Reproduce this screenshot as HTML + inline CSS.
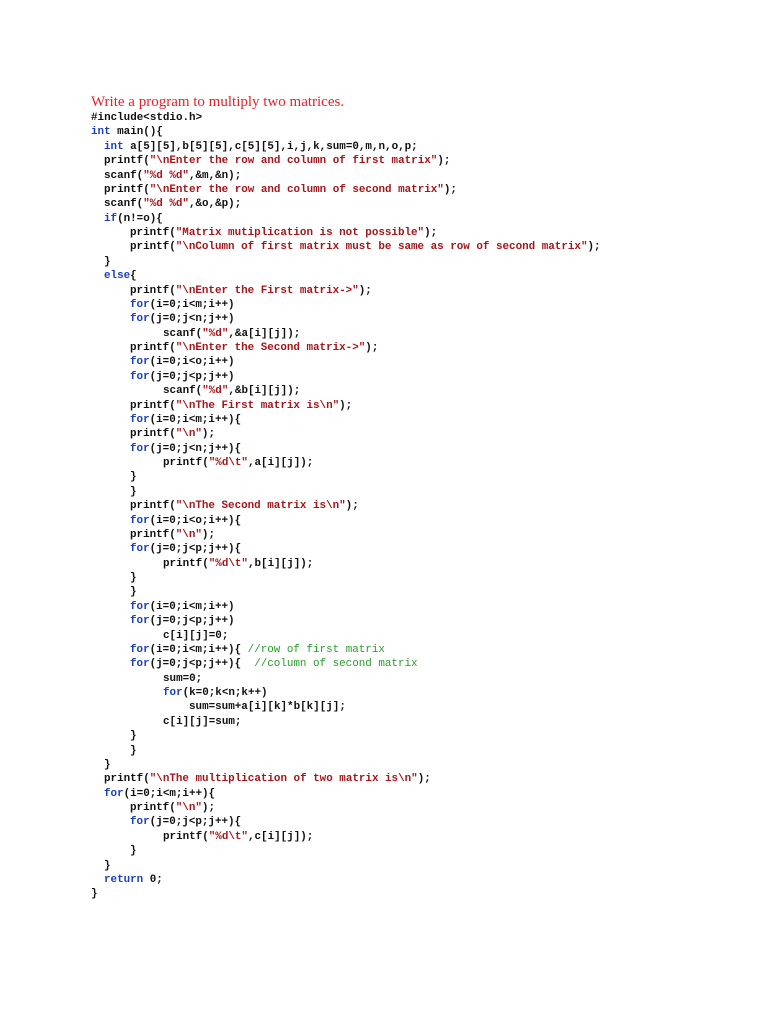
<!DOCTYPE html>
<html><head><meta charset="utf-8"><style>
body{margin:0;background:#fff;width:768px;height:1024px;position:relative;overflow:hidden}
.t{position:absolute;left:91px;top:94px;font:15px "Liberation Serif",serif;color:#e8202a}
.c{position:absolute;left:0;top:111px;font:bold 10.9px/14.39px "Liberation Mono",monospace;color:#111}
.c div{height:14.39px;white-space:pre}
.a{padding-left:91px}.b{padding-left:104px}.d{padding-left:130px}.e{padding-left:163px}.f{padding-left:189px}
k{color:#1a3fc0}s{color:#a3161a;text-decoration:none}g{color:#2a9a2a;font-weight:normal}
</style></head><body>
<div class="t">Write a program to multiply two matrices.</div>
<div class="c"><div class="a">#include&lt;stdio.h&gt;</div><div class="a"><k>int</k> main(){</div><div class="b"><k>int</k> a[5][5],b[5][5],c[5][5],i,j,k,sum=0,m,n,o,p;</div><div class="b">printf(<s>"\nEnter the row and column of first matrix"</s>);</div><div class="b">scanf(<s>"%d %d"</s>,&amp;m,&amp;n);</div><div class="b">printf(<s>"\nEnter the row and column of second matrix"</s>);</div><div class="b">scanf(<s>"%d %d"</s>,&amp;o,&amp;p);</div><div class="b"><k>if</k>(n!=o){</div><div class="d">printf(<s>"Matrix mutiplication is not possible"</s>);</div><div class="d">printf(<s>"\nColumn of first matrix must be same as row of second matrix"</s>);</div><div class="b">}</div><div class="b"><k>else</k>{</div><div class="d">printf(<s>"\nEnter the First matrix-&gt;"</s>);</div><div class="d"><k>for</k>(i=0;i&lt;m;i++)</div><div class="d"><k>for</k>(j=0;j&lt;n;j++)</div><div class="e">scanf(<s>"%d"</s>,&amp;a[i][j]);</div><div class="d">printf(<s>"\nEnter the Second matrix-&gt;"</s>);</div><div class="d"><k>for</k>(i=0;i&lt;o;i++)</div><div class="d"><k>for</k>(j=0;j&lt;p;j++)</div><div class="e">scanf(<s>"%d"</s>,&amp;b[i][j]);</div><div class="d">printf(<s>"\nThe First matrix is\n"</s>);</div><div class="d"><k>for</k>(i=0;i&lt;m;i++){</div><div class="d">printf(<s>"\n"</s>);</div><div class="d"><k>for</k>(j=0;j&lt;n;j++){</div><div class="e">printf(<s>"%d\t"</s>,a[i][j]);</div><div class="d">}</div><div class="d">}</div><div class="d">printf(<s>"\nThe Second matrix is\n"</s>);</div><div class="d"><k>for</k>(i=0;i&lt;o;i++){</div><div class="d">printf(<s>"\n"</s>);</div><div class="d"><k>for</k>(j=0;j&lt;p;j++){</div><div class="e">printf(<s>"%d\t"</s>,b[i][j]);</div><div class="d">}</div><div class="d">}</div><div class="d"><k>for</k>(i=0;i&lt;m;i++)</div><div class="d"><k>for</k>(j=0;j&lt;p;j++)</div><div class="e">c[i][j]=0;</div><div class="d"><k>for</k>(i=0;i&lt;m;i++){ <g>//row of first matrix</g></div><div class="d"><k>for</k>(j=0;j&lt;p;j++){  <g>//column of second matrix</g></div><div class="e">sum=0;</div><div class="e"><k>for</k>(k=0;k&lt;n;k++)</div><div class="f">sum=sum+a[i][k]*b[k][j];</div><div class="e">c[i][j]=sum;</div><div class="d">}</div><div class="d">}</div><div class="b">}</div><div class="b">printf(<s>"\nThe multiplication of two matrix is\n"</s>);</div><div class="b"><k>for</k>(i=0;i&lt;m;i++){</div><div class="d">printf(<s>"\n"</s>);</div><div class="d"><k>for</k>(j=0;j&lt;p;j++){</div><div class="e">printf(<s>"%d\t"</s>,c[i][j]);</div><div class="d">}</div><div class="b">}</div><div class="b"><k>return</k> 0;</div><div class="a">}</div></div>
</body></html>
